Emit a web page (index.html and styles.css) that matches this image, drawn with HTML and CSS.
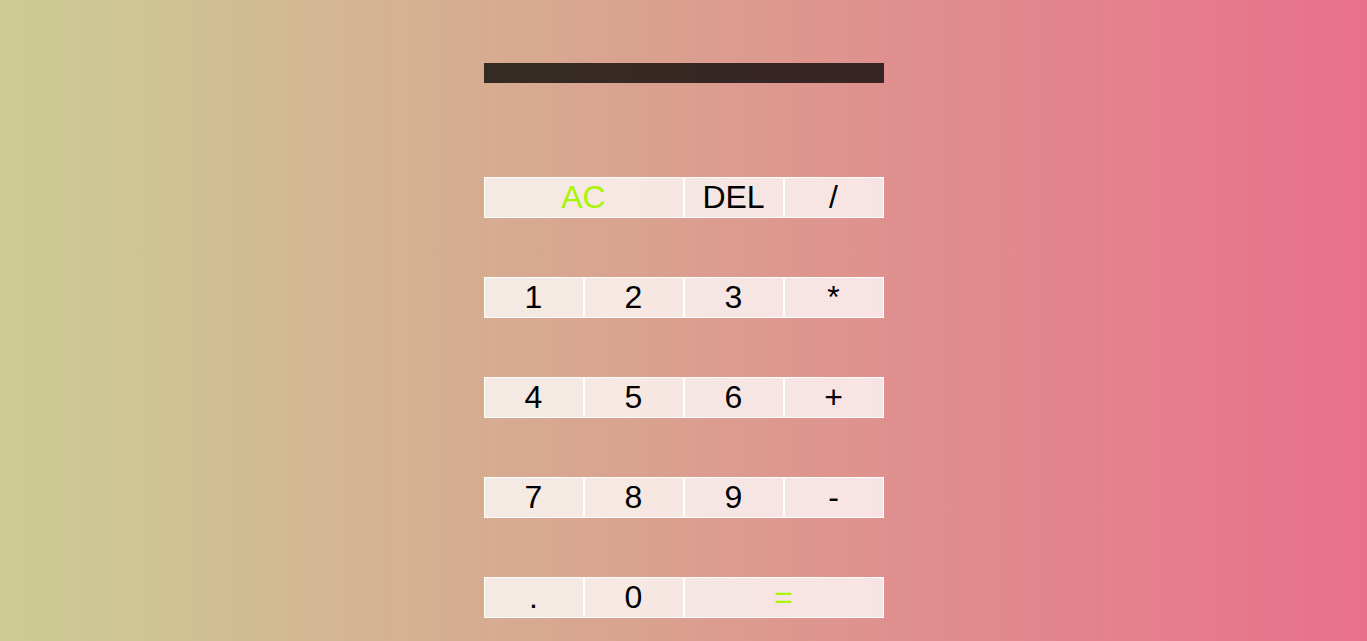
FILE: index.html
```html
<!DOCTYPE html>
<html>
<head>
<meta charset="utf-8">
<link rel="stylesheet" href="styles.css">
</head>
<body>
<div class="calculator">
  <div class="output"></div>
  <button class="span-two accent">AC</button>
  <button>DEL</button>
  <button>/</button>
  <button>1</button>
  <button>2</button>
  <button>3</button>
  <button>*</button>
  <button>4</button>
  <button>5</button>
  <button>6</button>
  <button>+</button>
  <button>7</button>
  <button>8</button>
  <button>9</button>
  <button>-</button>
  <button>.</button>
  <button>0</button>
  <button class="span-two accent">=</button>
</div>
</body>
</html>
```
FILE: styles.css
```css
* { box-sizing: border-box; }
html, body {
  margin: 0;
  padding: 0;
}
body {
  min-height: 100vh;
  background: linear-gradient(to right, #cccd94, #e9708b);
  font-family: "Liberation Sans", Arial, sans-serif;
}
.calculator {
  display: grid;
  justify-content: center;
  align-items: start;
  grid-template-columns: repeat(4, 100px);
  grid-template-rows: 120px repeat(5, 100px);
  padding-top: 57px;
}
.output {
  grid-column: 1 / -1;
  height: 20px;
  margin-top: 6px;
  background: rgba(0, 0, 0, 0.75);
}
button {
  font-family: "Liberation Sans", Arial, sans-serif;
  font-size: 32px;
  line-height: 37px;
  padding: 1px 6px;
  border: 1px solid #fff;
  background: rgba(255, 255, 255, 0.75);
  color: #000;
  outline: none;
  cursor: pointer;
}
.span-two { grid-column: span 2; }
.accent { color: #aaf500; }
```
